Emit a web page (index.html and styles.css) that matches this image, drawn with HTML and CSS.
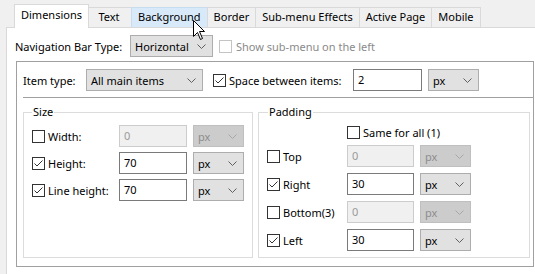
FILE: index.html
```html
<!DOCTYPE html>
<html lang="en">
<head>
    <meta charset="UTF-8">
    <title>Navigation Bar Properties</title>
    <link rel="stylesheet" href="styles.css">
</head>
<body>
    <div class="tabs">
        <div class="tab active">Dimensions</div>
        <div class="tab">Text</div>
        <div class="tab hover">Background</div>
        <div class="tab">Border</div>
        <div class="tab">Sub-menu Effects</div>
        <div class="tab">Active Page</div>
        <div class="tab">Mobile</div>
    </div>

    <div class="page">
        <div class="row nav-row">
            <span class="nav-label">Navigation Bar Type:</span>
            <div class="select nav-select"><span>Horizontal</span><svg class="arrow" width="9" height="5"><polyline points="0.5,0.5 4.5,4.5 8.5,0.5"/></svg></div>
            <span class="check disabled"></span>
            <span class="label-disabled">Show sub-menu on the left</span>
        </div>

        <div class="items-box">
            <div class="row item-row">
                <span class="item-label">Item type:</span>
                <div class="select item-select"><span>All main items</span><svg class="arrow" width="9" height="5"><polyline points="0.5,0.5 4.5,4.5 8.5,0.5"/></svg></div>
                <span class="check checked space-check"><svg width="11" height="11"><polyline points="1.5,5.5 4,8 9.5,2.5"/></svg></span>
                <span class="space-label">Space between items:</span>
                <div class="input space-input">2</div>
                <div class="select unit"><span>px</span><svg class="arrow" width="9" height="5"><polyline points="0.5,0.5 4.5,4.5 8.5,0.5"/></svg></div>
            </div>

            <div class="groups">
                <fieldset class="group size">
                    <legend>Size</legend>
                    <div class="row field">
                        <span class="check"></span>
                        <span class="size-label">Width:</span>
                        <div class="input disabled size-input">0</div>
                        <div class="select unit disabled"><span>px</span><svg class="arrow" width="9" height="5"><polyline points="0.5,0.5 4.5,4.5 8.5,0.5"/></svg></div>
                    </div>
                    <div class="row field">
                        <span class="check checked"><svg width="11" height="11"><polyline points="1.5,5.5 4,8 9.5,2.5"/></svg></span>
                        <span class="size-label">Height:</span>
                        <div class="input size-input">70</div>
                        <div class="select unit"><span>px</span><svg class="arrow" width="9" height="5"><polyline points="0.5,0.5 4.5,4.5 8.5,0.5"/></svg></div>
                    </div>
                    <div class="row field">
                        <span class="check checked"><svg width="11" height="11"><polyline points="1.5,5.5 4,8 9.5,2.5"/></svg></span>
                        <span class="size-label">Line height:</span>
                        <div class="input size-input">70</div>
                        <div class="select unit"><span>px</span><svg class="arrow" width="9" height="5"><polyline points="0.5,0.5 4.5,4.5 8.5,0.5"/></svg></div>
                    </div>
                </fieldset>

                <fieldset class="group padding">
                    <legend>Padding</legend>
                    <div class="row same-row">
                        <span class="check"></span>
                        <span class="same-label">Same for all (1)</span>
                    </div>
                    <div class="row field">
                        <span class="check"></span>
                        <span class="pad-label">Top</span>
                        <div class="input disabled pad-input">0</div>
                        <div class="select unit disabled"><span>px</span><svg class="arrow" width="9" height="5"><polyline points="0.5,0.5 4.5,4.5 8.5,0.5"/></svg></div>
                    </div>
                    <div class="row field">
                        <span class="check checked"><svg width="11" height="11"><polyline points="1.5,5.5 4,8 9.5,2.5"/></svg></span>
                        <span class="pad-label">Right</span>
                        <div class="input pad-input">30</div>
                        <div class="select unit"><span>px</span><svg class="arrow" width="9" height="5"><polyline points="0.5,0.5 4.5,4.5 8.5,0.5"/></svg></div>
                    </div>
                    <div class="row field">
                        <span class="check"></span>
                        <span class="pad-label">Bottom(3)</span>
                        <div class="input disabled pad-input">0</div>
                        <div class="select unit disabled"><span>px</span><svg class="arrow" width="9" height="5"><polyline points="0.5,0.5 4.5,4.5 8.5,0.5"/></svg></div>
                    </div>
                    <div class="row field">
                        <span class="check checked"><svg width="11" height="11"><polyline points="1.5,5.5 4,8 9.5,2.5"/></svg></span>
                        <span class="pad-label">Left</span>
                        <div class="input pad-input">30</div>
                        <div class="select unit"><span>px</span><svg class="arrow" width="9" height="5"><polyline points="0.5,0.5 4.5,4.5 8.5,0.5"/></svg></div>
                    </div>
                </fieldset>
            </div>
        </div>
    </div>

    <svg class="cursor" width="13" height="21" viewBox="0 0 13 21">
        <path d="M0.5,0.5 L0.5,16.5 L4.5,12.5 L7.5,19.5 L9.5,18.5 L6.5,11.5 L11.5,11.5 Z"/>
    </svg>
</body>
</html>
```

FILE: styles.css
```css
body {
    margin: 0;
    width: 535px;
    height: 274px;
    overflow: hidden;
    position: relative;
    background: #f0f0f0;
    font-family: "Noto Sans", sans-serif;
    font-size: 11px;
    color: #000;
}

.tabs {
    display: flex;
    align-items: flex-end;
    height: 27px;
    padding-left: 16px;
}
.tab {
    box-sizing: border-box;
    height: 20px;
    min-width: 46px;
    padding: 0 6px;
    margin-left: -1px;
    border: 1px solid #d9d9d9;
    border-bottom: none;
    background: #f0f0f0;
    line-height: 18px;
    text-align: center;
    white-space: nowrap;
}
.tab.active {
    position: relative;
    z-index: 1;
    height: 24px;
    margin: 0 -2px -1px -2px;
    padding: 0 6px;
    background: #fff;
    line-height: 20px;
}
.tab.hover {
    background: #d8eaf9;
    border-color: #c6dcef;
}

.page {
    box-sizing: border-box;
    height: 260px;
    margin-left: 6px;
    padding: 7px 0 0 8px;
    background: #fff;
    border: 1px solid #d9d9d9;
    border-right: none;
}

.row {
    display: flex;
    align-items: center;
    white-space: nowrap;
}
.nav-row { height: 22px; }
.nav-label { width: 115px; }
.label-disabled {
    margin-left: 4px;
    color: #8a8a8a;
}

.select {
    box-sizing: border-box;
    display: flex;
    align-items: center;
    justify-content: space-between;
    height: 22px;
    padding: 0 6px 0 4px;
    background: #e1e1e1;
    border: 1px solid #adadad;
}
.select.disabled {
    background: #cccccc;
    border-color: #bfbfbf;
    color: #8c8c8c;
}
.arrow polyline {
    fill: none;
    stroke: #606060;
    stroke-width: 1;
}
.select.disabled .arrow polyline { stroke: #a8a8a8; }
.nav-select { width: 83px; margin-right: 6px; }
.item-select { width: 117px; margin-right: 10px; }
.unit { width: 51px; margin-left: 6px; }

.input {
    box-sizing: border-box;
    height: 22px;
    padding: 0 4px;
    line-height: 20px;
    background: #fff;
    border: 1px solid #7a7a7a;
}
.input.disabled {
    background: #f0f0f0;
    border-color: #cccccc;
    color: #9a9a9a;
}

.check {
    box-sizing: border-box;
    flex: none;
    width: 13px;
    height: 13px;
    background: #fff;
    border: 1px solid #333;
}
.check svg {
    display: block;
}
.check polyline {
    fill: none;
    stroke: #333;
    stroke-width: 1;
}
.check.disabled { border-color: #c4c4c4; }

.items-box {
    box-sizing: border-box;
    width: 518px;
    height: 206px;
    margin: 4px 0 0 1px;
    padding: 7px 0 0 6px;
    border: 1px solid #a0a0a0;
}
.item-row { height: 22px; }
.item-label { width: 63px; }
.space-label { width: 124px; margin-left: 3px; }
.space-input { width: 69px; }

.groups {
    display: flex;
    gap: 5px;
    margin-top: 6px;
    padding-top: 6px;
    border-top: 1px solid #a0a0a0;
}
.group {
    box-sizing: border-box;
    height: 154px;
    margin: 0;
    padding: 5px 8px 0 8px;
    border: 1px solid #dcdcdc;
}
.group legend {
    padding: 0 1px;
    margin-left: 0;
    line-height: 16px;
}
.size { width: 229px; }
.padding { width: 272px; }
.padding legend { margin-left: 1px; }

.field { height: 22px; margin-bottom: 5px; }
.padding .field { margin-bottom: 6px; }
.size-label { width: 71px; margin-left: 3px; }
.size-input { width: 68px; }
.pad-label { width: 64px; margin-left: 3px; }
.pad-input { width: 67px; }

.same-row {
    height: 16px;
    margin: -1px 0 5px 80px;
}
.same-label { margin-left: 3px; }

.cursor {
    position: absolute;
    left: 193px;
    top: 20px;
}
.cursor path {
    fill: #fff;
    stroke: #000;
    stroke-width: 1;
    stroke-linejoin: miter;
}
```
